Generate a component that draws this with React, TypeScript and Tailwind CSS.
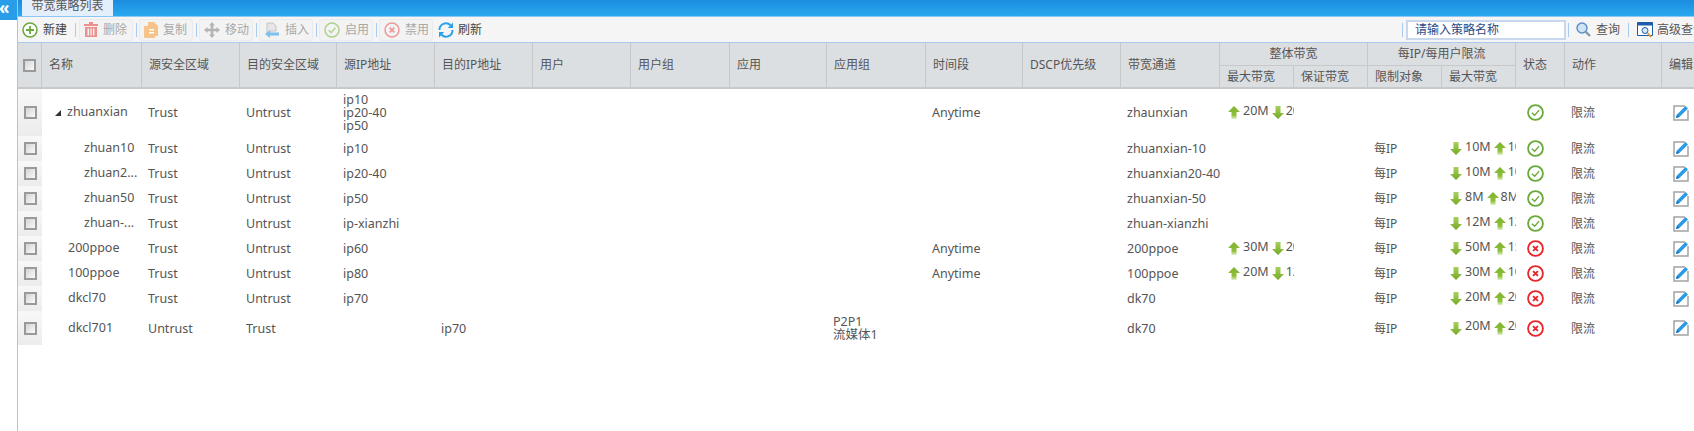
import React from 'react';

const FONT = 'font-["Noto_Sans","Noto_Sans_CJK_SC",sans-serif]';

type Row = {
  name: string;
  indent: string;
  tree?: boolean;
  src: string;
  dst: string;
  srcIp?: string[];
  dstIp?: string;
  app?: string[];
  time?: string;
  channel: string;
  total?: [string, string];
  perIp?: [string, string];
  ok: boolean;
  tall?: string;
};

const ROWS: Row[] = [
  { name: 'zhuanxian', indent: 'pl-[26px]', tree: true, src: 'Trust', dst: 'Untrust', srcIp: ['ip10', 'ip20-40', 'ip50'], time: 'Anytime', channel: 'zhaunxian', total: ['20M', '20M'], ok: true, tall: 'h-[47px]' },
  { name: 'zhuan10', indent: 'pl-[42px]', src: 'Trust', dst: 'Untrust', srcIp: ['ip10'], channel: 'zhuanxian-10', perIp: ['10M', '10M'], ok: true },
  { name: 'zhuan2...', indent: 'pl-[42px]', src: 'Trust', dst: 'Untrust', srcIp: ['ip20-40'], channel: 'zhuanxian20-40', perIp: ['10M', '10M'], ok: true },
  { name: 'zhuan50', indent: 'pl-[42px]', src: 'Trust', dst: 'Untrust', srcIp: ['ip50'], channel: 'zhuanxian-50', perIp: ['8M', '8M'], ok: true },
  { name: 'zhuan-...', indent: 'pl-[42px]', src: 'Trust', dst: 'Untrust', srcIp: ['ip-xianzhi'], channel: 'zhuan-xianzhi', perIp: ['12M', '12M'], ok: true },
  { name: '200ppoe', indent: 'pl-[26px]', src: 'Trust', dst: 'Untrust', srcIp: ['ip60'], time: 'Anytime', channel: '200ppoe', total: ['30M', '20M'], perIp: ['50M', '15M'], ok: false },
  { name: '100ppoe', indent: 'pl-[26px]', src: 'Trust', dst: 'Untrust', srcIp: ['ip80'], time: 'Anytime', channel: '100ppoe', total: ['20M', '12M'], perIp: ['30M', '10M'], ok: false },
  { name: 'dkcl70', indent: 'pl-[26px]', src: 'Trust', dst: 'Untrust', srcIp: ['ip70'], channel: 'dk70', perIp: ['20M', '20M'], ok: false },
  { name: 'dkcl701', indent: 'pl-[26px]', src: 'Untrust', dst: 'Trust', dstIp: 'ip70', app: ['P2P1', '流媒体1'], channel: 'dk70', perIp: ['20M', '20M'], ok: false, tall: 'h-[34px]' },
];

const COLS = [24, 100, 98, 97, 98, 98, 98, 99, 97, 99, 97, 98, 99, 74, 74, 74, 74, 49, 97, 32];

const PLAIN_HEADS = ['名称', '源安全区域', '目的安全区域', '源IP地址', '目的IP地址', '用户', '用户组', '应用', '应用组', '时间段', 'DSCP优先级', '带宽通道'];

function Checkbox() {
  return <span className="block w-[13px] h-[13px] mx-auto border-2 border-[#9a9a9a] bg-gradient-to-br from-[#d4d4d4] to-[#fafafa]" />;
}

function UpArrow({ id }: { id: string }) {
  return (
    <svg width="12" height="13" viewBox="0 0 12 13" className="inline-block shrink-0">
      <defs>
        <linearGradient id={id} x1="0" y1="0" x2="0" y2="1">
          <stop offset="0" stopColor="#7db32a" />
          <stop offset="0.7" stopColor="#8fc03c" />
          <stop offset="1" stopColor="#e0efc4" />
        </linearGradient>
      </defs>
      <path d="M6 0 L12 6 H8.5 V13 H3.5 V6 H0 Z" fill={`url(#${id})`} />
    </svg>
  );
}

function DownArrow({ id }: { id: string }) {
  return (
    <svg width="12" height="13" viewBox="0 0 12 13" className="inline-block shrink-0">
      <defs>
        <linearGradient id={id} x1="0" y1="0" x2="0" y2="1">
          <stop offset="0" stopColor="#a9d05c" />
          <stop offset="1" stopColor="#74a824" />
        </linearGradient>
      </defs>
      <path d="M3.5 0 H8.5 V7 H12 L6 13 L0 7 H3.5 Z" fill={`url(#${id})`} />
    </svg>
  );
}

function StatusIcon({ ok }: { ok: boolean }) {
  if (ok) {
    return (
      <svg width="17" height="17" viewBox="0 0 16 16" className="block">
        <circle cx="8" cy="8" r="7" fill="none" stroke="#6aa93c" strokeWidth="1.7" />
        <path d="M4.6 8.2 L7.2 10.6 L11.4 5.8" fill="none" stroke="#6aa93c" strokeWidth="1.3" />
      </svg>
    );
  }
  return (
    <svg width="17" height="17" viewBox="0 0 16 16" className="block">
      <circle cx="8" cy="8" r="7" fill="none" stroke="#e8262c" strokeWidth="1.7" />
      <path d="M5.7 5.7 L10.3 10.3 M10.3 5.7 L5.7 10.3" stroke="#e8262c" strokeWidth="1.8" />
    </svg>
  );
}

function EditIcon() {
  return (
    <svg width="16" height="16" viewBox="0 0 16 16" className="block">
      <path d="M12 1 H1 V15 H15 V5" fill="#fff" stroke="#a3a3a3" strokeWidth="1.5" />
      <path d="M3 13 L4 9.5 L12.5 1 L15 3.4 L6.4 12 Z" fill="#2a9ae8" />
      <path d="M3 13 L4 9.8 L6.2 12 Z" fill="#0f6fb8" />
    </svg>
  );
}

function RateCell({ pair, first, id }: { pair: [string, string]; first: 'up' | 'down'; id: string }) {
  const First = first === 'up' ? UpArrow : DownArrow;
  const Second = first === 'up' ? DownArrow : UpArrow;
  return (
    <div className="flex items-center overflow-hidden whitespace-nowrap text-[12.5px]">
      <First id={`${id}a`} />
      <span className="ml-[3px] -mt-[3px]">{pair[0]}</span>
      <span className="ml-[3px] flex"><Second id={`${id}b`} /></span>
      <span className="ml-[2px] -mt-[3px]">{pair[1]}</span>
    </div>
  );
}

function ToolButton({ icon, label }: { icon: React.ReactNode; label: string }) {
  return (
    <div className="flex items-center shrink-0 w-[54px] h-[22px] pl-[4px] gap-[5px] rounded-[3px] border border-[#ebebeb] bg-[#f3f3f3] text-[#a8a8a8] mr-[3px]">
      {icon}
      <span>{label}</span>
    </div>
  );
}

function Sep() {
  return <span className="w-px h-[14px] shrink-0 bg-[#a9cbee] mr-[2px]" />;
}

const toolIcons = {
  add: (
    <svg width="16" height="16" viewBox="0 0 16 16" className="shrink-0">
      <circle cx="8" cy="8" r="7" fill="#fff" stroke="#6aa93c" strokeWidth="1.5" />
      <path d="M8 4 V12 M4 8 H12" stroke="#6aa93c" strokeWidth="1.8" />
    </svg>
  ),
  trash: (
    <svg width="14" height="15" viewBox="0 0 14 15" className="shrink-0">
      <path d="M5 0 H9 V2 H14 V4 H0 V2 H5 Z" fill="#ee8f8f" />
      <path d="M1 5 H13 V15 H1 Z M3.5 6.5 V13.5 H5 V6.5 Z M6.3 6.5 V13.5 H7.7 V6.5 Z M9 6.5 V13.5 H10.5 V6.5 Z" fill="#ee8f8f" fillRule="evenodd" />
    </svg>
  ),
  copy: (
    <svg width="14" height="16" viewBox="0 0 14 16" className="shrink-0">
      <path d="M4 0 H10 L14 4 V14 H11 V16 H1 Q0 16 0 15 V4 H4 Z" fill="#f6c48a" />
      <path d="M5 7 H10 V8.5 H5 Z M5 10 H10 V11.5 H5 Z" fill="#fff" />
    </svg>
  ),
  move: (
    <svg width="16" height="16" viewBox="0 0 16 16" className="shrink-0">
      <path d="M8 0 L11 3.5 H9.3 V6.7 H12.5 V5 L16 8 L12.5 11 V9.3 H9.3 V12.5 H11 L8 16 L5 12.5 H6.7 V9.3 H3.5 V11 L0 8 L3.5 5 V6.7 H6.7 V3.5 H5 Z" fill="#b4b4b4" />
    </svg>
  ),
  insert: (
    <svg width="16" height="16" viewBox="0 0 16 16" className="shrink-0">
      <path d="M3 1 H9 L12 4 V9 H6 V13 H3 Z" fill="#e6e6e6" stroke="#c4c4c4" />
      <path d="M1 12 L6 8 V10.5 H15 V13.5 H6 V16 Z" fill="#7dc0ee" />
    </svg>
  ),
  enable: (
    <svg width="16" height="16" viewBox="0 0 16 16" className="shrink-0">
      <circle cx="8" cy="8" r="7" fill="none" stroke="#aed08c" strokeWidth="1.5" />
      <path d="M4.6 8.2 L7.2 10.6 L11.4 5.8" fill="none" stroke="#aed08c" strokeWidth="1.3" />
    </svg>
  ),
  disable: (
    <svg width="16" height="16" viewBox="0 0 16 16" className="shrink-0">
      <circle cx="8" cy="8" r="7" fill="none" stroke="#ee9a9a" strokeWidth="1.5" />
      <path d="M5.7 5.7 L10.3 10.3 M10.3 5.7 L5.7 10.3" stroke="#ee9a9a" strokeWidth="1.7" />
    </svg>
  ),
  refresh: (
    <svg width="16" height="16" viewBox="0 0 16 16" className="shrink-0">
      <path d="M1.5 8 A6.5 6.5 0 0 1 12.5 3.2" fill="none" stroke="#28a0ea" strokeWidth="2" />
      <path d="M14.5 8 A6.5 6.5 0 0 1 3.5 12.8" fill="none" stroke="#28a0ea" strokeWidth="2" />
      <path d="M15 0.5 V6 H9.8 Z M1 15.5 V10 H6.2 Z" fill="#28a0ea" />
    </svg>
  ),
  search: (
    <svg width="15" height="15" viewBox="0 0 15 15" className="shrink-0">
      <circle cx="6" cy="6" r="5" fill="#cfe3f6" stroke="#5a8ec4" strokeWidth="1.4" />
      <path d="M9.8 9.8 L14 14" stroke="#8a97a6" strokeWidth="2.4" />
    </svg>
  ),
  advanced: (
    <svg width="16" height="16" viewBox="0 0 16 16" className="shrink-0">
      <path d="M0.5 0.5 H15.5 V13.5 H0.5 Z" fill="#fff" stroke="#1c5da8" />
      <path d="M0.5 0.5 H15.5 V3.5 H0.5 Z" fill="#1c5da8" />
      <circle cx="8" cy="8.5" r="3" fill="#d6e8f8" stroke="#1c5da8" />
      <path d="M10.5 11 L14 15" stroke="#e0932a" strokeWidth="1.8" />
    </svg>
  ),
};

const thBase = 'font-normal text-left align-middle bg-[#dcdfe2] text-[#555] border-r border-[#c6c8ca] pl-[7px]';
const td = 'align-middle text-[#555] text-[12.5px] pl-[6px] leading-[13px] whitespace-nowrap overflow-hidden';

export default function App() {
  return (
    <div className={`flex w-[1694px] h-[431px] overflow-hidden bg-white text-[12px] ${FONT}`}>
      {/* collapse rail */}
      <div className="w-[17px] shrink-0">
        <div className="h-[20px] bg-[#2a9de8] text-white text-[17px] leading-[16px] font-bold overflow-hidden -indent-[1px]">«</div>
      </div>

      <div className="flex-1 min-w-0 border-l border-[#a3c6f0]">
        {/* title strip */}
        <div className="h-[17px] pl-[4px] bg-gradient-to-b from-[#1b8ddf] to-[#2aa9ef] border-b border-[#8cc6f2]">
          <div className="w-[91px] h-[16px] bg-[#e3effb] text-[#555] text-center leading-[12px] overflow-hidden">带宽策略列表</div>
        </div>

        {/* toolbar */}
        <div className="flex items-center h-[26px] bg-[#f5f5f5] border-b border-[#a9c9ef] pl-[4px] whitespace-nowrap overflow-hidden">
          <div className="flex items-center shrink-0 gap-[5px] text-[#444] w-[53px]">
            {toolIcons.add}
            <span>新建</span>
          </div>
          <Sep />
          <span className="w-[1px] shrink-0" />
          <ToolButton icon={toolIcons.trash} label="删除" />
          <Sep />
          <ToolButton icon={toolIcons.copy} label="复制" />
          <Sep />
          <ToolButton icon={toolIcons.move} label="移动" />
          <Sep />
          <ToolButton icon={toolIcons.insert} label="插入" />
          <Sep />
          <ToolButton icon={toolIcons.enable} label="启用" />
          <Sep />
          <ToolButton icon={toolIcons.disable} label="禁用" />
          <div className="flex items-center shrink-0 gap-[4px] text-[#444] ml-[2px]">
            {toolIcons.refresh}
            <span>刷新</span>
          </div>

          <div className="ml-[920px] flex items-center shrink-0">
            <Sep />
            <span className="w-px" />
            <div className="w-[160px] h-[20px] border-2 border-[#c9d7ec] bg-white pl-[7px] text-[#2c4a86] leading-[16px]">请输入策略名称</div>
            <span className="w-px h-[14px] bg-[#a9cbee] ml-[2px]" />
            <div className="flex items-center gap-[5px] ml-[7px] text-[#555] w-[52px]">
              {toolIcons.search}
              <span>查询</span>
            </div>
            <Sep />
            <div className="flex items-center gap-[4px] ml-[6px] text-[#555]">
              {toolIcons.advanced}
              <span>高级查询</span>
            </div>
          </div>
        </div>

        {/* policy table */}
        <table className="table-fixed border-separate border-spacing-0 w-[1676px]">
          <colgroup>
            {COLS.map((w, i) => (
              <col key={i} style={{ width: w }} />
            ))}
          </colgroup>
          <thead>
            <tr className="h-[23px]">
              <th rowSpan={2} className="bg-[#dcdfe2] border-r border-b-2 border-[#c6c8ca]">
                <Checkbox />
              </th>
              {PLAIN_HEADS.map((h) => (
                <th key={h} rowSpan={2} className={`${thBase} border-b-2 whitespace-nowrap`}>{h}</th>
              ))}
              <th colSpan={2} className="font-normal bg-[#dcdfe2] text-[#555] border-r border-b border-[#c6c8ca] text-center">整体带宽</th>
              <th colSpan={2} className="font-normal bg-[#dcdfe2] text-[#555] border-r border-b border-[#c6c8ca] text-center">每IP/每用户限流</th>
              <th rowSpan={2} className={`${thBase} border-b-2`}>状态</th>
              <th rowSpan={2} className={`${thBase} border-b-2`}>动作</th>
              <th rowSpan={2} className={`${thBase} border-b-2 border-r-0 whitespace-nowrap overflow-hidden`}>编辑</th>
            </tr>
            <tr className="h-[23px]">
              {['最大带宽', '保证带宽', '限制对象', '最大带宽'].map((h, i) => (
                <th key={i} className={`${thBase} border-b-2 pl-[6px]`}>{h}</th>
              ))}
            </tr>
          </thead>
          <tbody>
            {ROWS.map((r, i) => (
              <tr key={i} className={r.tall ?? 'h-[25px]'}>
                <td className="p-0 bg-gradient-to-b from-[#f8f8f8] to-[#ececec]">
                  <Checkbox />
                </td>
                <td className={`align-middle text-[#555] text-[12.5px] whitespace-nowrap overflow-hidden ${r.indent}`}>
                  {r.tree && <span className="inline-block align-middle mr-[6px] -ml-[13px] w-0 h-0 border-l-[6px] border-l-transparent border-b-[6px] border-b-[#333]" />}
                  {r.name}
                </td>
                <td className={td}>{r.src}</td>
                <td className={td}>{r.dst}</td>
                <td className={td}>{r.srcIp?.map((s) => <div key={s}>{s}</div>)}</td>
                <td className={td}>{r.dstIp}</td>
                <td className={td} />
                <td className={td} />
                <td className={td} />
                <td className={td}>{r.app?.map((s) => <div key={s}>{s}</div>)}</td>
                <td className={td}>{r.time}</td>
                <td className={td} />
                <td className={td}>{r.channel}</td>
                <td className="align-middle text-[#555] pl-[8px] overflow-hidden">
                  {r.total && <RateCell pair={r.total} first="up" id={`t${i}`} />}
                </td>
                <td />
                <td className={`${td} text-[12px]`}>{r.perIp && '每IP'}</td>
                <td className="align-middle text-[#555] pl-[8px] overflow-hidden">
                  {r.perIp && <RateCell pair={r.perIp} first="down" id={`p${i}`} />}
                </td>
                <td className="align-middle pl-[11px]">
                  <StatusIcon ok={r.ok} />
                </td>
                <td className={`${td} text-[12px]`}>限流</td>
                <td className="align-middle pl-[11px]">
                  <EditIcon />
                </td>
              </tr>
            ))}
          </tbody>
        </table>
      </div>
    </div>
  );
}
